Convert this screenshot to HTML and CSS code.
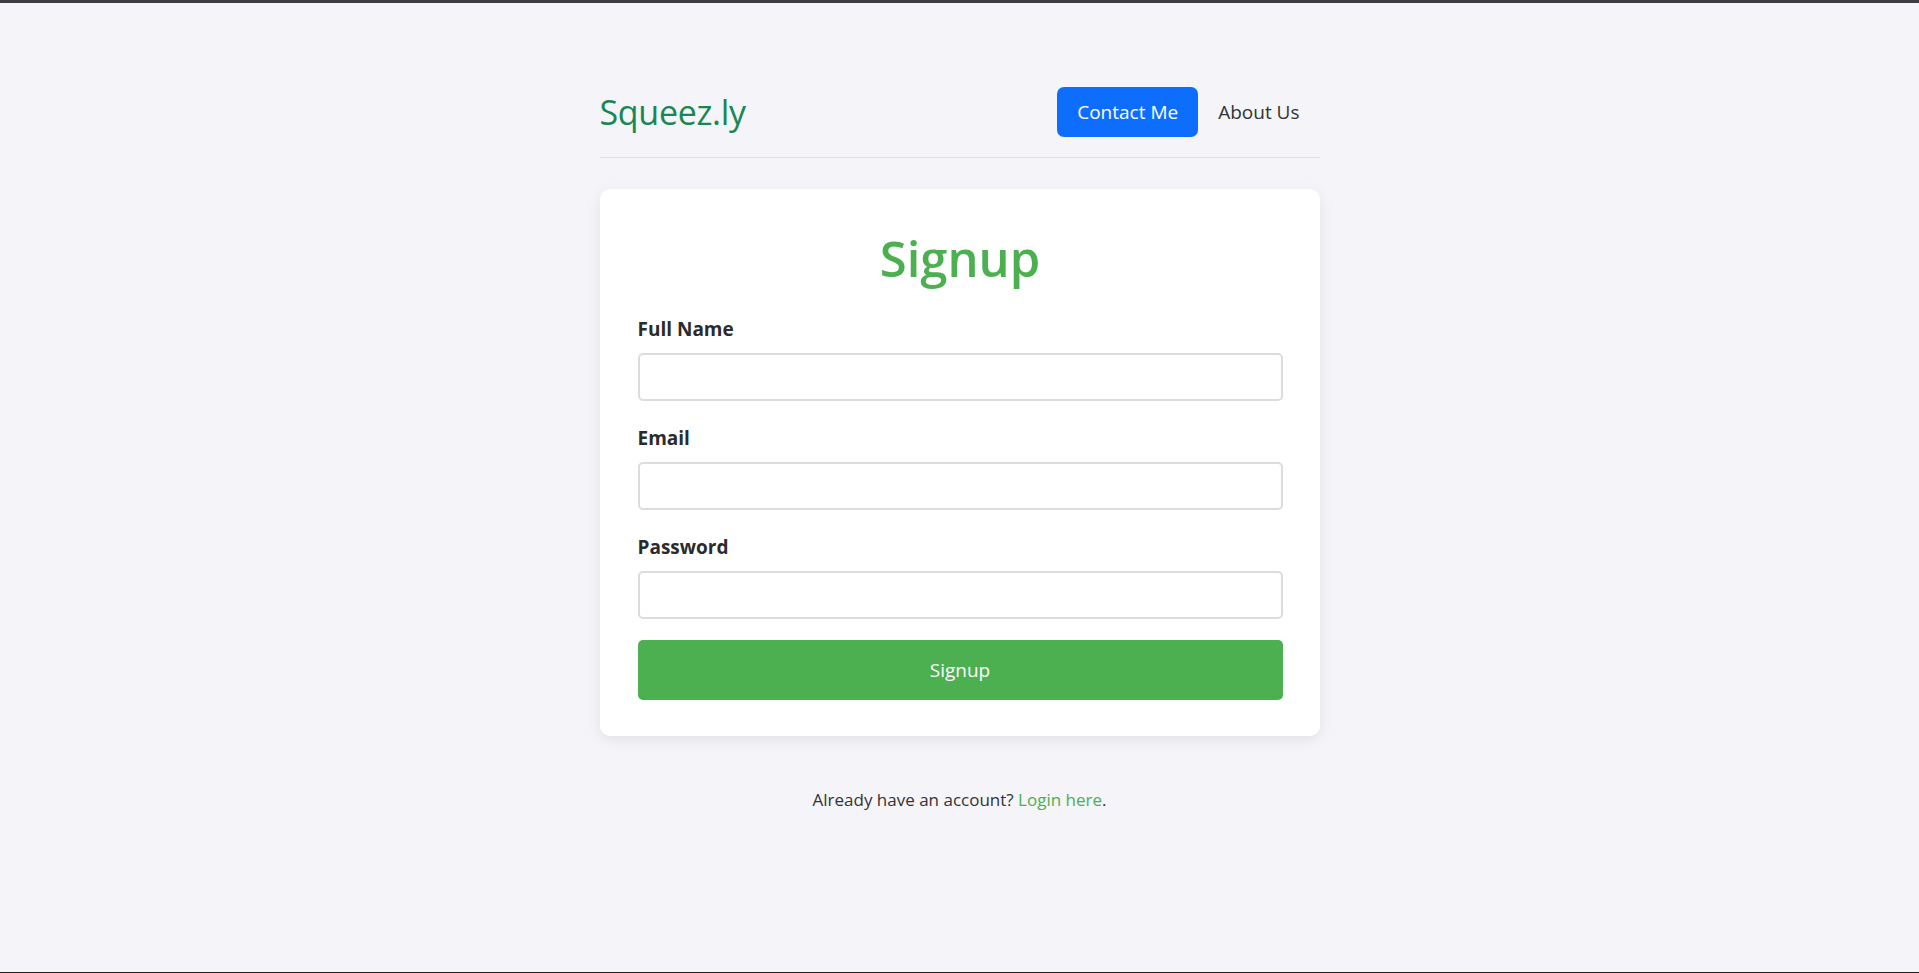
FILE: index.html
```html
<!DOCTYPE html>
<html lang="en">
<head>
<meta charset="utf-8">
<title>Squeez.ly - Signup</title>
<link rel="stylesheet" href="styles.css">
</head>
<body>
  <div class="container">
    <header class="site-header">
      <a class="brand" href="#">Squeez.ly</a>
      <nav class="nav">
        <a class="nav-link active" href="#">Contact Me</a>
        <a class="nav-link" href="#">About Us</a>
      </nav>
    </header>

    <main class="card">
      <h1 class="card-title">Signup</h1>
      <form class="form">
        <div class="field">
          <label class="label" for="name">Full Name</label>
          <input class="input" id="name" type="text">
        </div>
        <div class="field">
          <label class="label" for="email">Email</label>
          <input class="input" id="email" type="email">
        </div>
        <div class="field">
          <label class="label" for="password">Password</label>
          <input class="input" id="password" type="password">
        </div>
        <button class="submit" type="button">Signup</button>
      </form>
    </main>

    <p class="footer-note">Already have an account? <a class="link" href="#">Login here</a>.</p>
  </div>
</body>
</html>
```

FILE: styles.css
```css
html, body {
  height: 100%;
}

body {
  margin: 0;
  box-sizing: border-box;
  background: #f4f4f9;
  border-top: 3px solid #3d3d44;
  border-bottom: 1px solid #1e1e1e;
  font-family: "Open Sans", "Noto Sans", "Liberation Sans", sans-serif;
  color: #333;
  font-size: 20px;
}

.container {
  width: 720px;
  margin: 0 auto;
  padding-top: 64px;
}

.site-header {
  display: flex;
  align-items: center;
  justify-content: space-between;
  padding: 20px 0;
  border-bottom: 1px solid #dfe0e4;
  margin-bottom: 31px;
}

.brand {
  font-size: 34px;
  line-height: 40px;
  color: #198754;
  text-decoration: none;
  letter-spacing: -0.3px;
}

.nav {
  display: flex;
}

.nav-link {
  display: block;
  padding: 10px 20px;
  font-size: 19px;
  line-height: 30px;
  color: #333;
  text-decoration: none;
  border-radius: 7px;
}

.nav-link.active {
  background: #0d6efd;
  color: #fff;
}

.card {
  background: #fff;
  border-radius: 10px;
  padding: 39px 37px 36px 38px;
  box-shadow: 0 4px 14px rgba(0, 0, 0, 0.08);
}

.card-title {
  margin: 0 0 26px;
  text-align: center;
  color: #4caf50;
  font-size: 49px;
  font-weight: 600;
  line-height: 60px;
}

.field {
  margin-bottom: 22px;
}

.label {
  display: block;
  font-weight: 700;
  font-size: 19px;
  line-height: 30px;
  margin-bottom: 9px;
  color: #2b2b2b;
}

.input {
  display: block;
  width: 100%;
  height: 48px;
  box-sizing: border-box;
  border: 2px solid #dcdcdc;
  border-radius: 5px;
  background: #fff;
  font: inherit;
}

.submit {
  display: block;
  width: 100%;
  height: 60px;
  margin-top: -1px;
  border: none;
  border-radius: 5px;
  background: #4caf50;
  color: #fff;
  font-family: inherit;
  font-size: 19px;
}

.footer-note {
  margin: 50px 0 0;
  text-align: center;
  font-size: 17px;
  line-height: 27px;
  color: #333;
}

.link {
  color: #4caf50;
  text-decoration: none;
}
```
